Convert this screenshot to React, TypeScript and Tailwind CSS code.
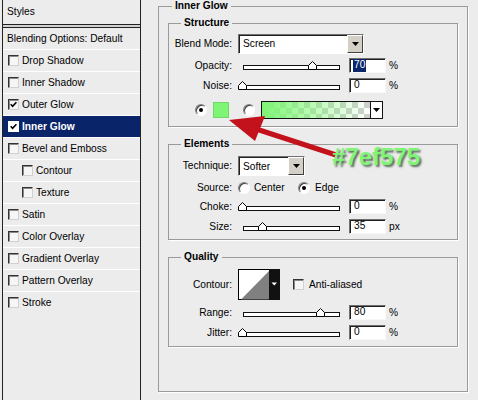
import React from "react";

const layers = [
  { name: "Drop Shadow", checked: false },
  { name: "Inner Shadow", checked: false },
  { name: "Outer Glow", checked: true },
  { name: "Inner Glow", checked: true, active: true },
  { name: "Bevel and Emboss", checked: false },
  { name: "Contour", checked: false, sub: true },
  { name: "Texture", checked: false, sub: true },
  { name: "Satin", checked: false },
  { name: "Color Overlay", checked: false },
  { name: "Gradient Overlay", checked: false },
  { name: "Pattern Overlay", checked: false },
  { name: "Stroke", checked: false },
];

function Check({ on, light }: { on?: boolean; light?: boolean }) {
  return (
    <span
      className={`flex w-[11px] h-[11px] shrink-0 items-center justify-center border ${
        light
          ? "border-white bg-white"
          : "border-t-[#333] border-l-[#333] border-r-[#d0d0d0] border-b-[#d0d0d0] bg-[#f6f6f6] shadow-[inset_1px_1px_0_#8a8a8a]"
      }`}
    >
      {on && (
        <svg width="7" height="7" viewBox="0 0 7 7">
          <path d="M0.7 3.3 L2.6 5.3 L6.4 1.2" fill="none" stroke="#000" strokeWidth="1.6" />
        </svg>
      )}
    </span>
  );
}

function Radio({ on }: { on?: boolean }) {
  return (
    <span className="flex w-[12px] h-[12px] shrink-0 rounded-full bg-white border border-t-[#808080] border-l-[#808080] border-r-white border-b-white shadow-[inset_1px_1px_0_#404040] items-center justify-center">
      {on && <span className="w-[4px] h-[4px] rounded-full bg-black" />}
    </span>
  );
}

function Arrow() {
  return (
    <svg width="7" height="4" viewBox="0 0 7 4">
      <path d="M0 0H7L3.5 4Z" fill="#000" />
    </svg>
  );
}

function Select({ w, value }: { w: string; value: string }) {
  return (
    <div className={`flex ${w} h-[20px] items-stretch bg-white border border-t-[#707070] border-l-[#707070] border-r-white border-b-white shadow-[inset_1px_1px_0_#202020]`}>
      <span className="flex-1 flex items-center pl-[4px] pt-[1px]">{value}</span>
      <span className="w-[16px] flex items-center justify-center bg-[#d4d0c8] border border-t-white border-l-white border-r-[#404040] border-b-[#404040]">
        <Arrow />
      </span>
    </div>
  );
}

function NumBox({ value, sel }: { value: string; sel?: boolean }) {
  return (
    <div className="w-[37px] h-[15px] flex items-center pl-[3px] bg-white border border-t-[#6f6f6f] border-l-[#6f6f6f] border-r-[#f8f8f8] border-b-[#f8f8f8] shadow-[inset_1px_1px_0_#202020] leading-none">
      {sel ? <span className="bg-[#0a246a] text-white px-[1px] py-[1px]">{value}</span> : <span className="pl-[1px]">{value}</span>}
    </div>
  );
}

function Slider({ at }: { at: number }) {
  return (
    <div className="relative w-[102px] h-[9px] shrink-0">
      <div className="absolute left-[5px] right-0 bottom-0 h-[5px] border border-[#111] bg-white" />
      <svg className="absolute bottom-0" style={{ left: at - 4.5 }} width="9" height="9" viewBox="0 0 9 9">
        <path d="M0.5 8.5V4.5L4.5 0.5L8.5 4.5V8.5Z" fill="#fff" stroke="#000" />
      </svg>
    </div>
  );
}

function Label({ children }: { children: React.ReactNode }) {
  return <span className="w-[63px] shrink-0 text-right">{children}</span>;
}

function SliderRow({ label, at, value, unit, sel, className }: { label: string; at: number; value: string; unit: string; sel?: boolean; className: string }) {
  return (
    <div className={`flex items-center h-[15px] ${className}`}>
      <Label>{label}</Label>
      <div className="ml-[6px]">
        <Slider at={at} />
      </div>
      <div className="ml-[9px]">
        <NumBox value={value} sel={sel} />
      </div>
      <span className="ml-[3px]">{unit}</span>
    </div>
  );
}

function Group({ title, className, children }: { title: string; className: string; children: React.ReactNode }) {
  return (
    <fieldset className={`border border-[#9a9a9a] shadow-[1px_1px_0_#fff] ${className}`}>
      <legend className="ml-[12px] px-[3px] font-bold leading-[12px]">{title}</legend>
      <div className="flex flex-col pl-[0px]">{children}</div>
    </fieldset>
  );
}

export default function App() {
  return (
    <div className="relative flex w-[478px] h-[400px] overflow-hidden bg-[#ececec] text-black text-[10.2px] [font-family:'Liberation_Sans',Arial,sans-serif]">
      <div className="ml-[2px] w-[139px] h-full border-x border-[#222] flex flex-col shrink-0">
        <div className="h-[24px] flex items-center pl-[4px]">Styles</div>
        <div className="h-[4px] border-y border-[#222] bg-[#d2d2d2]" />
        <div className="h-[21px] flex items-center pl-[4px]">Blending Options: Default</div>
        {layers.map((l) => (
          <div
            key={l.name}
            className={`h-[22px] flex items-center gap-[3px] border-t border-white ${l.sub ? "pl-[19px]" : "pl-[5px]"} ${
              l.active ? "bg-[#0a246a] text-white font-bold" : ""
            }`}
          >
            <Check on={l.checked} light={l.active} />
            <span>{l.name}</span>
          </div>
        ))}
      </div>

      <fieldset className="ml-[17px] w-[310px] h-[392px] shrink-0 border border-[#9a9a9a] shadow-[1px_1px_0_#fff] px-[9px]">
        <legend className="ml-[4px] px-[3px] font-bold leading-[12px]">Inner Glow</legend>

        <Group title="Structure" className="mt-[5px] pb-[7px]">
          <div className="flex items-center h-[21px] mt-[4px]">
            <Label>Blend Mode:</Label>
            <div className="ml-[6px]">
              <Select w="w-[126px]" value="Screen" />
            </div>
          </div>
          <SliderRow label="Opacity:" at={74} value="70" unit="%" sel className="mt-[4px]" />
          <SliderRow label="Noise:" at={4.5} value="0" unit="%" className="mt-[5px]" />
          <div className="flex items-center h-[18px] mt-[8px] pl-[26px]">
            <Radio on />
            <span className="ml-[6px] w-[16px] h-[16px] bg-[#7ef575] border border-[#6fd866]" />
            <span className="ml-[14px]">
              <Radio />
            </span>
            <div className="ml-[6px] flex w-[122px] h-[18px] border border-[#111] shadow-[inset_1px_1px_0_#404040]">
              <div className="flex-1 [background-image:linear-gradient(to_right,#7ef575,rgba(126,245,117,0)),repeating-conic-gradient(#cfcfcf_0_25%,#ffffff_0_50%)] [background-size:100%_100%,12px_12px]" />
              <div className="w-[12px] border-l border-[#111] bg-white flex items-center justify-center">
                <Arrow />
              </div>
            </div>
          </div>
        </Group>

        <Group title="Elements" className="mt-[11px] pb-[5px]">
          <div className="flex items-center h-[20px] mt-[6px]">
            <Label>Technique:</Label>
            <div className="ml-[6px]">
              <Select w="w-[67px]" value="Softer" />
            </div>
          </div>
          <div className="flex items-center h-[15px] mt-[4px]">
            <Label>Source:</Label>
            <div className="ml-[6px] w-[60px] flex items-center gap-[4px]">
              <Radio />
              <span>Center</span>
            </div>
            <div className="flex items-center gap-[5px]">
              <Radio on />
              <span>Edge</span>
            </div>
          </div>
          <SliderRow label="Choke:" at={4.5} value="0" unit="%" className="mt-[4px]" />
          <SliderRow label="Size:" at={24} value="35" unit="px" className="mt-[5px]" />
        </Group>

        <Group title="Quality" className="mt-[11px] pb-[6px]">
          <div className="flex items-center h-[31px] mt-[6px]">
            <Label>Contour:</Label>
            <svg className="ml-[6px] shrink-0" width="42" height="31" viewBox="0 0 42 31">
              <rect x="0.5" y="0.5" width="41" height="30" fill="#fff" stroke="#000" />
              <path d="M3 30.5 L31 2 V30.5Z" fill="#808080" />
              <rect x="31" y="0" width="11" height="31" fill="#111" />
              <path d="M33.5 13.5 h5.5 l-2.75 3z" fill="#fff" />
            </svg>
            <span className="ml-[13px]">
              <Check />
            </span>
            <span className="ml-[5px]">Anti-aliased</span>
          </div>
          <SliderRow label="Range:" at={82} value="80" unit="%" className="mt-[5px]" />
          <SliderRow label="Jitter:" at={4.5} value="0" unit="%" className="mt-[5px]" />
        </Group>
      </fieldset>

      <svg className="absolute left-0 top-0 pointer-events-none" width="478" height="400" viewBox="0 0 478 400">
        <line x1="336" y1="155" x2="250" y2="127" stroke="#c3121c" strokeWidth="5" />
        <path d="M229 120 L265 116 L255 141Z" fill="#c3121c" />
      </svg>
      <div className="absolute left-[332px] top-[145px] text-[24px] font-bold leading-none text-[#7ef575] [text-shadow:2px_2px_2px_rgba(40,70,40,0.75)]">
        #7ef575
      </div>
    </div>
  );
}
